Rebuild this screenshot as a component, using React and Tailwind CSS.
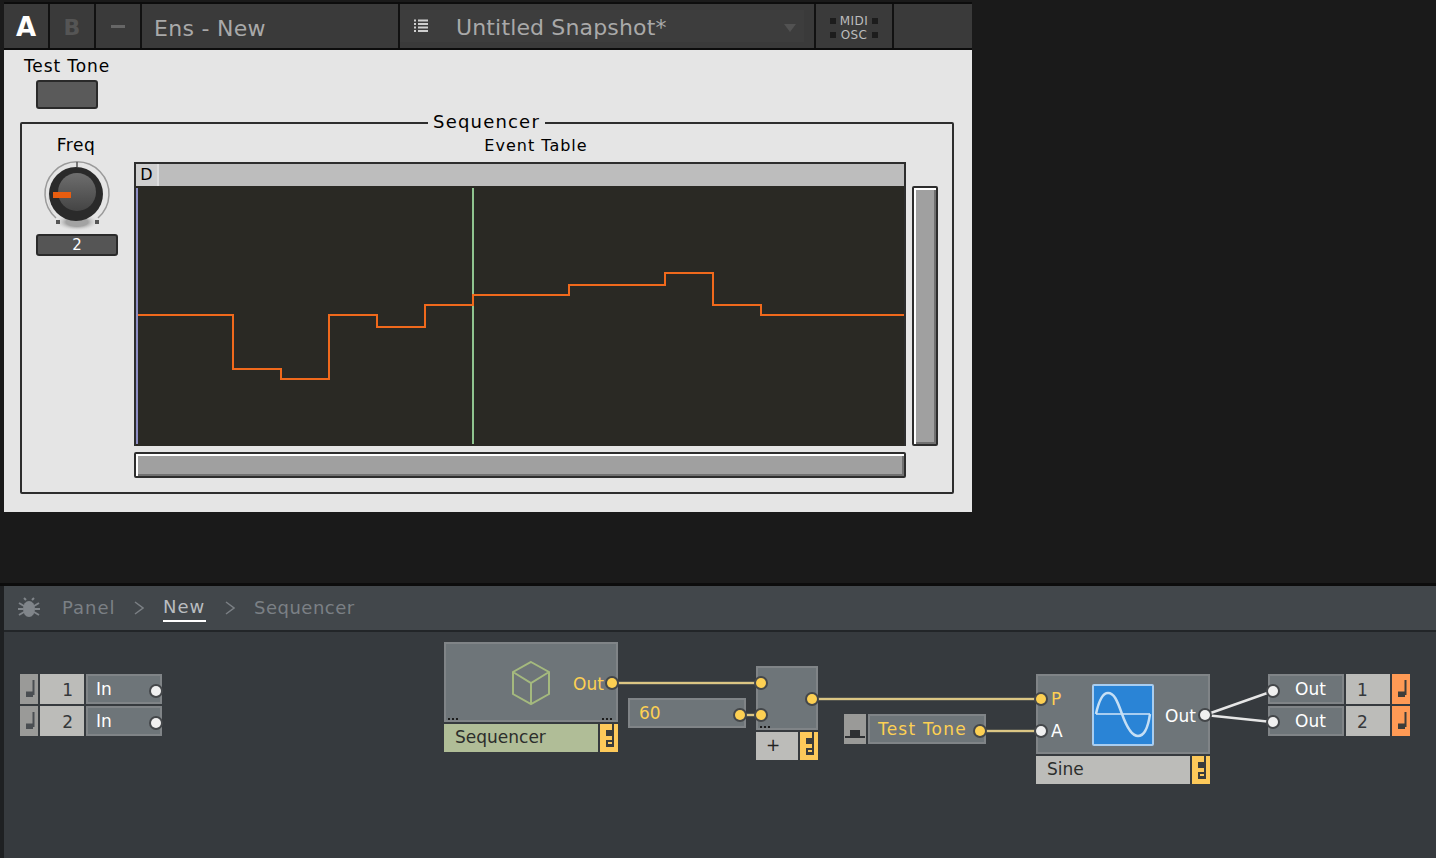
import React from 'react'

const stepPoints = '138,315 233,315 233,369 281,369 281,379 329,379 329,315 377,315 377,327 425,327 425,305 473,305 473,295 569,295 569,285 665,285 665,273 713,273 713,305 761,305 761,315 904,315'

function Cell({ className = '', children }) {
  return <div className={`flex items-center justify-center border-r-2 border-[#111111] bg-[#3a3a3a] ${className}`}>{children}</div>
}

function TopBar() {
  return (
    <div className="flex h-[48px] w-[968px] border-y-2 border-[#0c0c0c] bg-[#3a3a3a]">
      <Cell className="w-[46px] pt-[3px] text-[26px] font-bold text-white">A</Cell>
      <Cell className="w-[46px] pt-[3px] text-[22px] font-bold text-[#555555]">B</Cell>
      <Cell className="w-[46px] text-[22px] font-bold text-[#666666]">
        <span className="h-[3px] w-[14px] bg-[#666666]" />
      </Cell>
      <Cell className="w-[258px] justify-start pl-3 pt-[4px] text-[22px] tracking-[0.3px] text-[#a9a9a9]">Ens - New</Cell>
      <Cell className="w-[416px] justify-start">
        <div className="flex h-[32px] w-[404px] items-center bg-[#3d3d3d] pl-3.5">
          <svg width="14" height="14" viewBox="0 0 14 14" className="mr-[28px]">
            <path d="M0 1.5h2M4 1.5h10M0 5h2M4 5h10M0 8.5h2M4 8.5h10M0 12h2M4 12h10" stroke="#cfcfcf" strokeWidth="2" />
          </svg>
          <span className="flex-1 pt-[3px] text-[22px] tracking-[0.15px] text-[#a9a9a9]">Untitled Snapshot*</span>
          <svg width="12" height="8" viewBox="0 0 12 8" className="mr-2 mt-1">
            <path d="M0 0h12L6 8z" fill="#525252" />
          </svg>
        </div>
      </Cell>
      <Cell className="w-[78px] gap-1 pt-[3px]">
        <Dots />
        <div className="text-center text-[12px] leading-[14px] tracking-[0.4px] text-[#bdbdbd]">
          <div>MIDI</div>
          <div>OSC</div>
        </div>
        <Dots />
      </Cell>
      <div className="w-[78px]" />
    </div>
  )
}

function Dots() {
  return (
    <div className="flex flex-col gap-2">
      <span className="h-[6px] w-[6px] bg-[#1c1c1c]" />
      <span className="h-[6px] w-[6px] bg-[#1c1c1c]" />
    </div>
  )
}

function Knob() {
  return (
    <svg width="68" height="72" viewBox="0 0 68 72" className="mr-[1px] mt-[5px] block">
      <defs>
        <radialGradient id="knobShade" cx="50%" cy="50%" r="50%">
          <stop offset="50%" stopColor="#777777" stopOpacity="0.6" />
          <stop offset="100%" stopColor="#e5e5e5" stopOpacity="0" />
        </radialGradient>
        <linearGradient id="knobCap" x1="0" y1="0" x2="0" y2="1">
          <stop offset="0%" stopColor="#6e6e6e" />
          <stop offset="100%" stopColor="#444444" />
        </linearGradient>
      </defs>
      <ellipse cx="34" cy="61" rx="22" ry="9" fill="url(#knobShade)" />
      <path d="M13 57A32 32 0 1 1 55 57" fill="none" stroke="#9a9a9a" strokeWidth="1.5" />
      <path d="M10 52A28 28 0 0 1 8 26" fill="none" stroke="#d8d8d8" strokeWidth="1" />
      <path d="M34 1v5" stroke="#555555" strokeWidth="1.5" />
      <circle cx="33" cy="33" r="27" fill="#2a2a2a" />
      <circle cx="34" cy="31" r="19" fill="url(#knobCap)" />
      <rect x="10" y="31" width="18" height="6" fill="#e85d10" />
      <rect x="13" y="59" width="4" height="4" fill="#555555" />
      <rect x="52" y="59" width="4" height="4" fill="#555555" />
    </svg>
  )
}

function Scrollbar({ className = '' }) {
  return <div className={`rounded-[2px] border-2 border-[#2d2d2d] bg-[#a0a0a0] shadow-[inset_2px_2px_0_#ffffff,inset_-2px_-2px_0_#707070] ${className}`} />
}

function EventTable() {
  return (
    <div className="w-[772px]">
      <div className="flex h-[24px] border-t-2 border-l-2 border-r-2 border-[#2d2d2d] bg-[#bdbdbd]">
        <div className="flex w-[23px] items-center justify-center border-r-2 border-[#dddddd] bg-[#cfcfcf] text-[16px] leading-none text-black">D</div>
      </div>
      <div className="h-[260px] border-x-2 border-[#2d2d2d] bg-[#2a2924]">
        <svg width="768" height="260" viewBox="136 186 768 260" className="block">
          <rect x="136" y="188" width="2" height="256" fill="#8f8fc4" />
          <rect x="472" y="188" width="2" height="256" fill="#8fc48f" />
          <polyline points={stepPoints} fill="none" stroke="#f0691c" strokeWidth="2" />
        </svg>
      </div>
    </div>
  )
}

function Panel() {
  return (
    <div className="h-[462px] w-[968px] bg-[#e5e5e5] pl-4 text-black">
      <div className="flex w-[94px] flex-col items-center pt-1.5">
        <div className="text-[17px] leading-[20px] tracking-[0.9px]">Test Tone</div>
        <div className="mt-[4px] h-[29px] w-[62px] rounded-[3px] border-2 border-[#2a2a2a] bg-[#5a5a5a]" />
      </div>
      <div className="relative mt-[13px] h-[372px] w-[934px] rounded-[2px] border-2 border-[#2d2d2d]">
        <div className="absolute left-[406px] top-[-13px] bg-[#e5e5e5] px-[5px] text-[18px] leading-[22px] tracking-[1.2px]">Sequencer</div>
        <div className="flex pl-[14px] pt-[10px]">
          <div className="flex w-[82px] flex-col items-center">
            <div className="mr-[2px] text-[17px] leading-[22px] tracking-[0.5px]">Freq</div>
            <Knob />
            <div className="mt-[1px] flex h-[22px] w-[82px] items-center justify-center rounded-[3px] border-2 border-[#2a2a2a] bg-[#555555] text-[15px] text-white">2</div>
          </div>
          <div className="ml-[16px] flex flex-col">
            <div className="text-center text-[16px] leading-[24px] tracking-[1px]">Event Table</div>
            <div className="mt-[4px] flex">
              <EventTable />
              <Scrollbar className="ml-[6px] mt-[24px] h-[260px] w-[26px]" />
            </div>
            <Scrollbar className="mt-[6px] h-[26px] w-[772px]" />
          </div>
        </div>
      </div>
    </div>
  )
}

function Breadcrumb() {
  return (
    <div className="flex h-[46px] items-center border-b-2 border-[#222528] bg-[#42474b] pl-[14px] text-[18px] text-[#7b8085]">
      <svg width="22" height="22" viewBox="0 0 22 22" className="mr-[22px]">
        <ellipse cx="11" cy="12" rx="6" ry="8" fill="#80858a" />
        <path d="M1 6l5 3M21 6l-5 3M0 12h5M22 12h-5M1 18l5-3M21 18l-5-3M8 3L6 1M14 3l2-2" stroke="#80858a" strokeWidth="2" fill="none" />
      </svg>
      <span className="w-[53px] pb-[1px] tracking-[1px]">Panel</span>
      <Chevron />
      <span className="w-[43px] border-b-2 border-white leading-[26px] tracking-[1px] text-[#b9bdc0]">New</span>
      <Chevron />
      <span className="pb-[1px] tracking-[0.5px]">Sequencer</span>
    </div>
  )
}

function Chevron() {
  return (
    <svg width="10" height="14" viewBox="0 0 10 14" className="mx-[19px]">
      <path d="M1 1l8 6-8 6" fill="none" stroke="#7b8085" strokeWidth="1.5" />
    </svg>
  )
}

function Note({ fill = '#4a4e52' }) {
  return (
    <svg width="10" height="18" viewBox="0 0 10 18" className="ml-[2px]">
      <path d="M7.5 0h2v15h-2zM1 11.5h7v5.5H1z" fill={fill} />
    </svg>
  )
}

function Handle({ className = '' }) {
  return (
    <div className={`absolute bg-[#fdc95a] ${className}`}>
      <svg width="18" height="28" viewBox="0 0 18 28" className="block">
        <path d="M12 0h2v22h-2zM6 6h8v6H6zM6 16h8v7H6z" fill="#3a3c3c" />
        <path d="M8 18h4v2H8z" fill="#fdc95a" />
      </svg>
    </div>
  )
}

function Box({ className = '', children }) {
  return <div className={`absolute border-2 border-[#808487] bg-[#6e7579] ${className}`}>{children}</div>
}

function Label({ className = '', children }) {
  return <div className={`absolute flex items-center text-[17px] ${className}`}>{children}</div>
}

function Port({ x, y, color = '#fdd053' }) {
  return (
    <>
      <circle cx={x} cy={y} r="7" fill="#44474a" />
      <circle cx={x} cy={y} r="5" fill={color} />
    </>
  )
}

function ModuleDots({ className = '' }) {
  return (
    <div className={`absolute flex gap-[2px] ${className}`}>
      <span className="h-[2px] w-[2px] bg-[#1c1c1c]" />
      <span className="h-[2px] w-[2px] bg-[#1c1c1c]" />
      <span className="h-[2px] w-[2px] bg-[#1c1c1c]" />
    </div>
  )
}

function IoRow({ y, n, left }) {
  const top = { 674: 'top-[42px]', 706: 'top-[74px]' }[y]
  if (left) {
    return (
      <>
        <div className={`absolute left-[20px] flex h-[30px] w-[18px] items-center justify-center bg-[#9a9a98] ${top}`}><Note /></div>
        <div className={`absolute left-[40px] flex h-[30px] w-[44px] items-center justify-end bg-[#bcbcb9] pr-[11px] pt-[3px] text-[17px] text-[#35383b] ${top}`}>{n}</div>
        <div className={`absolute left-[86px] flex h-[30px] w-[76px] items-center border-2 border-[#808487] bg-[#6e7579] pl-[8px] pt-[2px] text-[17px] text-white ${top}`}>In</div>
      </>
    )
  }
  return (
    <>
      <div className={`absolute left-[1268px] flex h-[30px] w-[76px] items-center border-2 border-[#808487] bg-[#6e7579] pl-[25px] pt-[2px] text-[17px] text-white ${top}`}>Out</div>
      <div className={`absolute left-[1346px] flex h-[30px] w-[44px] items-center bg-[#bcbcb9] pl-[11px] pt-[3px] text-[17px] text-[#35383b] ${top}`}>{n}</div>
      <div className={`absolute left-[1392px] flex h-[30px] w-[18px] items-center justify-center bg-[#ff9a55] ${top}`}><Note fill="#3e3d3a" /></div>
    </>
  )
}

// structure view: module nodes sit on a free canvas, coordinates are relative to the canvas top (y = 632)
function Canvas() {
  return (
    <div className="relative h-[226px] bg-[#363a3e]">
      <div className="absolute inset-y-0 left-0 w-1 bg-[#1e2022]" />
      <IoRow y={674} n="1" left />
      <IoRow y={706} n="2" left />

      <Box className="left-[444px] top-[10px] h-[80px] w-[174px]">
        <svg width="44" height="48" viewBox="0 0 44 48" className="absolute left-[65px] top-[15px]">
          <path d="M20 3l18 10v22L20 45 2 35V13zM2 13l18 11 18-11M20 24v21" fill="none" stroke="#a4b97e" strokeWidth="2" />
        </svg>
      </Box>
      <Label className="left-[573px] top-[43px] h-[20px] text-[#fdd053]">Out</Label>
      <ModuleDots className="left-[448px] top-[86px]" />
      <ModuleDots className="left-[602px] top-[86px]" />
      <Label className="left-[444px] top-[92px] h-[28px] w-[154px] bg-[#b0bd97] pl-[11px] text-[#2c2e2c]">Sequencer</Label>
      <Handle className="left-[600px] top-[92px] h-[28px] w-[18px]" />

      <Box className="left-[628px] top-[66px] flex h-[30px] w-[118px] items-center pl-[9px] pt-[2px] text-[17px] text-[#fdd053]">60</Box>

      <Box className="left-[756px] top-[34px] h-[64px] w-[62px]" />
      <ModuleDots className="left-[760px] top-[94px]" />
      <Label className="left-[756px] top-[100px] h-[28px] w-[42px] justify-center bg-[#bcbcb9] pr-[8px] text-[#222222]">+</Label>
      <Handle className="left-[800px] top-[100px] h-[28px] w-[18px]" />

      <div className="absolute left-[844px] top-[82px] flex h-[30px] w-[22px] items-center justify-center bg-[#9a9a98]">
        <svg width="20" height="8" viewBox="0 0 20 8" className="mt-[10px]"><path d="M5 0h10v6h5v2H0V6h5z" fill="#2e3033" /></svg>
      </div>
      <Box className="left-[868px] top-[82px] flex h-[30px] w-[118px] items-center pl-[8px] pt-[2px] text-[17px] tracking-[1.2px] text-[#fdd053]">Test Tone</Box>

      <Box className="left-[1036px] top-[42px] h-[80px] w-[174px]">
        <div className="absolute left-[54px] top-[8px] h-[62px] w-[62px] rounded-[2px] border-2 border-[#a8cdf0] bg-[#2a84d6]">
          <svg width="58" height="58" viewBox="0 0 58 58" className="block">
            <path d="M2 28h54" stroke="#a8cdf0" strokeWidth="2" />
            <path d="M2 28C5 14 9 7 14 7c6 0 9 7 14 21s10 22 16 22 10-8 12-22" fill="none" stroke="#c5dff5" strokeWidth="2.5" />
          </svg>
        </div>
      </Box>
      <Label className="left-[1165px] top-[75px] h-[20px] text-white">Out</Label>
      <Label className="left-[1051px] top-[58px] h-[20px] text-[#fdd053]">P</Label>
      <Label className="left-[1051px] top-[90px] h-[20px] text-white">A</Label>
      <Label className="left-[1036px] top-[124px] h-[28px] w-[154px] bg-[#bcbcb9] pl-[11px] text-[#2c2e2c]">Sine</Label>
      <Handle className="left-[1192px] top-[124px] h-[28px] w-[18px]" />

      <IoRow y={674} n="1" />
      <IoRow y={706} n="2" />

      <svg width="1436" height="226" viewBox="0 632 1436 226" className="pointer-events-none absolute inset-0">
        <path d="M612 683H761M740 715H761M812 699H1041M980 731H1041" stroke="#55564f" strokeWidth="4" fill="none" />
        <path d="M612 683H761M740 715H761M812 699H1041M980 731H1041" stroke="#dcc684" strokeWidth="2" fill="none" />
        <path d="M1205 715L1273 691M1205 715L1273 722" stroke="#e6e6e6" strokeWidth="2.5" fill="none" />
        <Port x={612} y={683} />
        <Port x={761} y={683} />
        <Port x={740} y={715} />
        <Port x={761} y={715} />
        <Port x={812} y={699} />
        <Port x={980} y={731} />
        <Port x={1041} y={699} />
        <Port x={1041} y={731} color="#f0f0f0" />
        <Port x={1205} y={715} color="#f0f0f0" />
        <Port x={1273} y={691} color="#f0f0f0" />
        <Port x={1273} y={722} color="#f0f0f0" />
        <Port x={156} y={691} color="#f0f0f0" />
        <Port x={156} y={723} color="#f0f0f0" />
      </svg>
    </div>
  )
}

export default function App() {
  return (
    <div className="h-[858px] w-[1436px] overflow-hidden bg-[#1a1a1a] font-['DejaVu_Sans',sans-serif]">
      <div className="h-[533px] pl-1 pt-[2px]">
        <TopBar />
        <Panel />
      </div>
      <div className="mt-[50px] border-t-[3px] border-[#0c0c0c] bg-[#1e2022] pl-1">
        <Breadcrumb />
        <div className="-ml-1">
          <Canvas />
        </div>
      </div>
    </div>
  )
}
